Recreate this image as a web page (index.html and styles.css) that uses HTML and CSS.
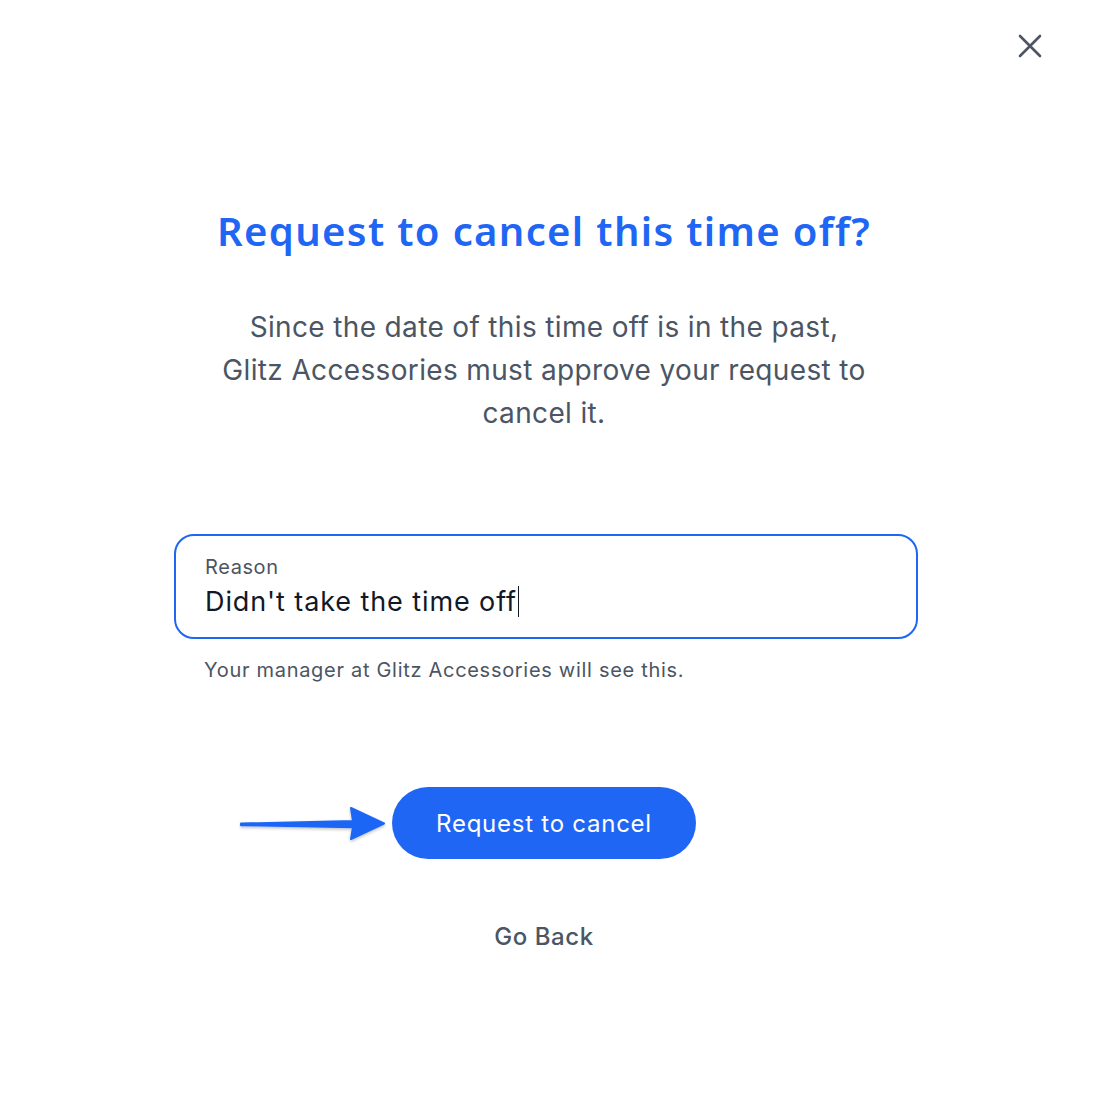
FILE: index.html
```html
<!DOCTYPE html>
<html lang="en">
<head>
    <meta charset="UTF-8">
    <meta name="viewport" content="width=device-width, initial-scale=1.0">
    <title>Request to cancel</title>
    <link rel="stylesheet" href="styles.css">
</head>

<body>
    <div class="dialog">
        <button class="close" aria-label="Close">
            <svg width="24" height="24" viewBox="0 0 24 24">
                <path d="M2 2 L22 22 M22 2 L2 22" stroke="#4b5563" stroke-width="2.6" stroke-linecap="round" fill="none"/>
            </svg>
        </button>

        <h1>Request to cancel this time off?</h1>
        <p class="lead">Since the date of this time off is in the past,<br>Glitz Accessories must approve your request to cancel it.</p>

        <div class="field">
            <div class="field-box">
                <span class="field-label">Reason</span>
                <span class="field-value">Didn't take the time off<span class="caret"></span></span>
            </div>
            <p class="field-help">Your manager at Glitz Accessories will see this.</p>
        </div>

        <div class="actions">
            <div class="primary-row">
                <svg class="pointer" width="150" height="40" viewBox="0 0 150 40">
                    <defs>
                        <filter id="shade" x="-10%" y="-50%" width="120%" height="200%">
                            <feDropShadow dx="0" dy="1.5" stdDeviation="1.5" flood-color="#000" flood-opacity="0.25"/>
                        </filter>
                    </defs>
                    <path filter="url(#shade)" fill="#1f66f5" stroke="#1f66f5" stroke-width="2" stroke-linejoin="round"
                          d="M2 19.6 L114 17 L112 4 L145 19.5 L112 35 L114 23.2 L2 21.2 Z"/>
                </svg>
                <button class="primary">Request to cancel</button>
            </div>
            <button class="link">Go Back</button>
        </div>
    </div>
</body>

</html>
```

FILE: styles.css
```css
body {
    margin: 0;
    background-color: #fff;
    font-family: Inter, 'Noto Sans', sans-serif;
    color: #4b5563;
}

.dialog {
    position: relative;
    width: 1088px;
    height: 1118px;
    display: flex;
    flex-direction: column;
    align-items: center;
    box-sizing: border-box;
    padding-top: 203px;
}

.close {
    position: absolute;
    top: 34px;
    right: 46px;
    padding: 0;
    border: none;
    background: none;
    cursor: pointer;
    line-height: 0;
}

h1 {
    margin: 0;
    font-family: 'Noto Sans', sans-serif;
    font-weight: 600;
    font-size: 40px;
    line-height: 56px;
    color: #1f66f5;
    letter-spacing: 1.35px;
}

.lead {
    margin: 47px 0 0;
    width: 680px;
    text-align: center;
    font-size: 28px;
    line-height: 43px;
    letter-spacing: 0.35px;
    color: #4b5563;
}

.field {
    margin: 99px 0 0 4px;
    width: 744px;
}

.field-box {
    display: flex;
    flex-direction: column;
    height: 105px;
    box-sizing: border-box;
    border: 2px solid #1f66f5;
    border-radius: 20px;
    padding: 17px 29px 0;
}

.field-label {
    font-size: 20px;
    line-height: 28px;
    letter-spacing: 0.6px;
    color: #4b5563;
}

.field-value {
    margin-top: 3px;
    font-size: 27px;
    line-height: 36px;
    letter-spacing: 0.9px;
    color: #111827;
}

.caret {
    display: inline-block;
    width: 1.5px;
    height: 31px;
    margin-left: 1px;
    vertical-align: -6px;
    background-color: #111827;
}

.field-help {
    margin: 17px 0 0 30px;
    font-size: 20px;
    line-height: 28px;
    letter-spacing: 0.7px;
    color: #4b5563;
}

.actions {
    margin-top: 103px;
    display: flex;
    flex-direction: column;
    align-items: center;
}

.primary-row {
    position: relative;
}

.pointer {
    position: absolute;
    left: -153px;
    top: 17px;
}

.primary {
    width: 304px;
    height: 72px;
    border: none;
    border-radius: 36px;
    background-color: #1f66f5;
    color: #fff;
    font-family: Inter, 'Noto Sans', sans-serif;
    font-size: 24px;
    letter-spacing: 0.75px;
    cursor: pointer;
}

.link {
    margin-top: 62px;
    border: none;
    background: none;
    padding: 0;
    font-family: Inter, 'Noto Sans', sans-serif;
    font-size: 24px;
    font-weight: 500;
    line-height: 32px;
    letter-spacing: 0.55px;
    color: #4b5563;
    cursor: pointer;
}
```
